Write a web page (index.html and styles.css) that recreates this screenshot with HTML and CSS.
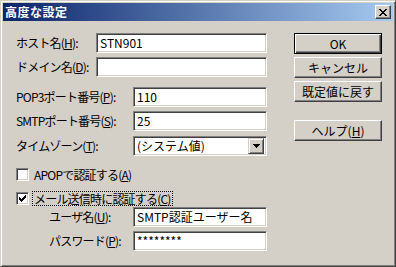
FILE: index.html
```html
<!DOCTYPE html>
<html lang="ja">
<head>
<meta charset="utf-8">
<title>高度な設定</title>
<link rel="stylesheet" href="styles.css">
</head>
<body>
<div class="window">
  <div class="titlebar">
    <span class="title">高度な設定</span>
    <span class="close"><svg width="8" height="7" viewBox="0 0 8 7" shape-rendering="crispEdges"><path d="M0 0h2v1h-2z M6 0h2v1h-2z M1 1h2v1h-2z M5 1h2v1h-2z M2 2h4v1h-4z M3 3h2v1h-2z M2 4h4v1h-4z M1 5h2v1h-2z M5 5h2v1h-2z M0 6h2v1h-2z M6 6h2v1h-2z"/></svg></span>
  </div>
  <div class="main">
    <div class="form">
      <div class="row r-host"><span class="lbl">ホスト名(<u>H</u>):</span><span class="field">STN901</span></div>
      <div class="row r-dom"><span class="lbl">ドメイン名(<u>D</u>):</span><span class="field"></span></div>
      <div class="row r-pop"><span class="lbl wide">POP3ポート番号(<u>P</u>):</span><span class="field short">110</span></div>
      <div class="row r-smtp"><span class="lbl wide">SMTPポート番号(<u>S</u>):</span><span class="field short">25</span></div>
      <div class="row r-tz"><span class="lbl wide">タイムゾーン(<u>T</u>):</span>
        <span class="field short combo"><span class="combo-text">(システム値)</span><span class="drop"><svg width="7" height="4" viewBox="0 0 7 4" shape-rendering="crispEdges"><path d="M0 0h7v1h-1v1h-1v1h-1v1h-1v-1h-1v-1h-1v-1h-1z"/></svg></span></span>
      </div>
      <div class="check r-apop"><span class="box"></span><span class="ctext">APOPで認証する(<u>A</u>)</span></div>
      <div class="check r-mail"><span class="box"><svg width="7" height="7" viewBox="0 0 7 7" shape-rendering="crispEdges"><path d="M0 2h1v3h-1z M1 3h1v3h-1z M2 4h1v3h-1z M3 3h1v3h-1z M4 2h1v3h-1z M5 1h1v3h-1z M6 0h1v3h-1z"/></svg></span><span class="ctext focus">メール送信時に認証する(<u>C</u>)</span></div>
      <div class="row sub r-user"><span class="lbl sublbl">ユーザ名(<u>U</u>):</span><span class="field short">SMTP認証ユーザー名</span></div>
      <div class="row sub r-pw"><span class="lbl sublbl">パスワード(<u>P</u>):</span><span class="field short">********</span></div>
    </div>
    <div class="buttons">
      <div class="btn default"><span class="btn-in">OK</span></div>
      <div class="btn b-cancel"><span class="btn-in">キャンセル</span></div>
      <div class="btn b-def"><span class="btn-in">既定値に戻す</span></div>
      <div class="btn b-help"><span class="btn-in">ヘルプ(<u>H</u>)</span></div>
    </div>
  </div>
</div>
</body>
</html>
```

FILE: styles.css
```css
* { box-sizing: border-box; }
html, body { margin: 0; padding: 0; }
body {
  width: 396px; height: 267px; overflow: hidden;
  background: #d4d0c8;
  font-family: "Noto Sans CJK JP", sans-serif;
  font-size: 12px; color: #000;
}
u { text-decoration: underline; text-underline-offset: 1px; }
.window {
  width: 396px; height: 267px;
  background: #d4d0c8;
  border: 1px solid;
  border-color: #d4d0c8 #404040 #404040 #d4d0c8;
  box-shadow: inset 1px 1px #fff, inset -1px -1px #808080;
  padding: 2px;
  display: flex; flex-direction: column;
}
.titlebar {
  height: 18px; flex: none;
  background: linear-gradient(to right, #0a246a, #a6caf0);
  display: flex; align-items: center; justify-content: space-between;
  padding: 0 2px 0 2px;
}
.title { color: #fff; font-weight: bold; font-size: 12px; line-height: 18px; letter-spacing: 0.5px; }
.close {
  width: 16px; height: 14px;
  background: #d4d0c8;
  border: 1px solid; border-color: #fff #404040 #404040 #fff;
  box-shadow: inset -1px -1px #808080;
  display: flex; align-items: center; justify-content: center;
}
.close svg { display: block; }
.main { display: flex; padding: 12px 11px 0 13px; gap: 27px; }
.form { width: 251px; display: flex; flex-direction: column; }
.row { display: flex; align-items: center; height: 20px; }
.lbl { width: 80px; flex: none; white-space: nowrap; line-height: 20px; letter-spacing: -0.8px; }
.lbl.wide { width: 117px; }
.field {
  width: 171px; height: 20px; flex: none; background: #fff;
  border: 1px solid; border-color: #808080 #fff #fff #808080;
  box-shadow: inset 1px 1px #404040, inset -1px -1px #d4d0c8;
  padding: 0 3px; line-height: 17px; white-space: nowrap; overflow: hidden;
}
.field.short { width: 134px; }
.r-dom { margin-top: 4px; }
.r-pop { margin-top: 10px; }
.r-smtp { margin-top: 4px; }
.r-tz { margin-top: 5px; }
.combo { display: flex; align-items: center; justify-content: space-between; padding: 2px 2px 2px 3px; }
.combo-text { line-height: 16px; }
.drop {
  width: 16px; height: 16px; background: #d4d0c8; flex: none;
  border: 1px solid; border-color: #d4d0c8 #404040 #404040 #d4d0c8;
  box-shadow: inset 1px 1px #fff, inset -1px -1px #808080;
  display: flex; align-items: center; justify-content: center;
}
.drop svg { display: block; }
.check { display: flex; align-items: center; height: 15px; }
.r-apop { margin-top: 11px; }
.r-mail { margin-top: 9px; }
.box {
  width: 13px; height: 13px; background: #fff; flex: none;
  border: 1px solid; border-color: #808080 #fff #fff #808080;
  box-shadow: inset 1px 1px #404040, inset -1px -1px #d4d0c8;
  display: flex; align-items: center; justify-content: center;
  margin-right: 4px;
}
.box svg { display: block; }
.ctext { line-height: 13px; padding: 0 1px; white-space: nowrap; letter-spacing: -0.8px; }
.focus { outline: 1px dotted #000; }
.sub { padding-left: 33px; }
.r-user { margin-top: 1px; }
.r-pw { margin-top: 4px; }
.lbl.sublbl { width: 84px; }
.buttons { width: 88px; display: flex; flex-direction: column; }
.btn {
  height: 21px; background: #d4d0c8;
  border: 1px solid; border-color: #fff #404040 #404040 #fff;
  box-shadow: inset -1px -1px #808080;
  display: flex; align-items: center; justify-content: center;
}
.btn-in { line-height: 16px; white-space: nowrap; }
.default { border: 1px solid #000; box-shadow: inset 1px 1px #fff, inset -1px -1px #404040, inset -2px -2px #808080; }
.b-cancel { margin-top: 3px; }
.b-def { margin-top: 3px; }
.b-help { margin-top: 18px; }
```
